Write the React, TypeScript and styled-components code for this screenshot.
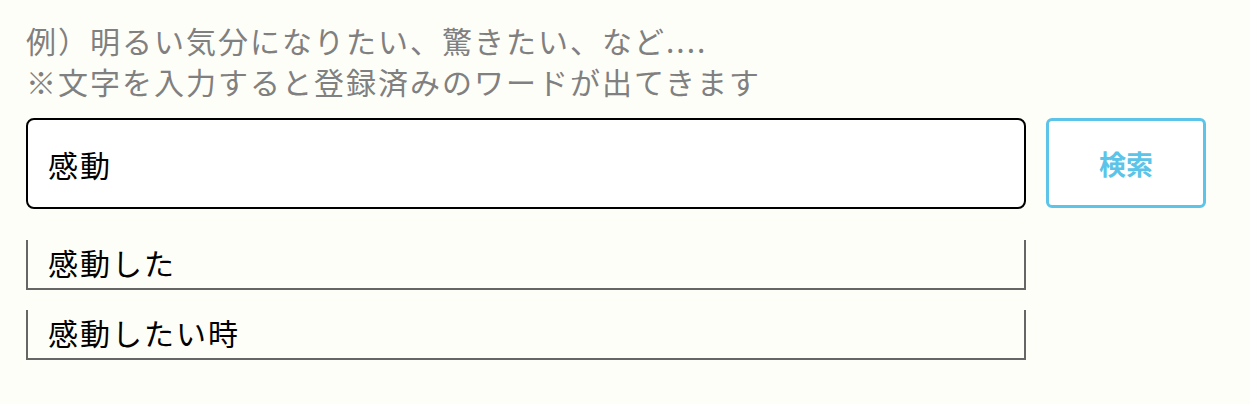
import React from "react";
import styled, { createGlobalStyle } from "styled-components";

const GlobalStyle = createGlobalStyle`
  html, body {
    margin: 0;
    padding: 0;
    background: #fefef8;
  }
  body {
    font-family: "Noto Sans CJK JP", "Noto Sans", sans-serif;
  }
`;

const Page = styled.div`
  padding: 20px 0 0 26px;
  width: 1180px;
`;

const Hint = styled.p`
  margin: 0;
  color: #808080;
  font-size: 30px;
  line-height: 41px;
  letter-spacing: 2px;
`;

const SearchRow = styled.div`
  display: flex;
  align-items: flex-start;
  gap: 20px;
  margin-top: 16px;
`;

const InputBox = styled.div`
  box-sizing: border-box;
  width: 1000px;
  height: 91px;
  border: 2px solid #000;
  border-radius: 8px;
  background: #fff;
  display: flex;
  align-items: center;
  padding-left: 20px;
  font-size: 30px;
  letter-spacing: 2px;
  color: #000;
`;

const SearchButton = styled.button`
  box-sizing: border-box;
  width: 160px;
  height: 90px;
  border: 3px solid #5bc4e8;
  border-radius: 6px;
  background: #fff;
  color: #5bc4e8;
  font-family: "Noto Sans CJK JP", sans-serif;
  font-weight: 700;
  font-size: 27px;
  padding: 0;
  cursor: pointer;
`;

const SuggestList = styled.ul`
  list-style: none;
  margin: 31px 0 0;
  padding: 0;
  display: flex;
  flex-direction: column;
  gap: 20px;
`;

const SuggestItem = styled.li`
  box-sizing: border-box;
  width: 1000px;
  height: 50px;
  border: 2px solid #666;
  border-top: none;
  display: flex;
  align-items: center;
  padding: 0 0 4px 20px;
  font-size: 30px;
  letter-spacing: 2px;
  color: #000;
`;

export default function App() {
  const suggestions = ["感動した", "感動したい時"];
  return (
    <>
      <GlobalStyle />
      <Page>
        <Hint>例）明るい気分になりたい、驚きたい、など....</Hint>
        <Hint>※文字を入力すると登録済みのワードが出てきます</Hint>
        <SearchRow>
          <InputBox>感動</InputBox>
          <SearchButton>検索</SearchButton>
        </SearchRow>
        <SuggestList>
          {suggestions.map((s) => (
            <SuggestItem key={s}>{s}</SuggestItem>
          ))}
        </SuggestList>
      </Page>
    </>
  );
}
